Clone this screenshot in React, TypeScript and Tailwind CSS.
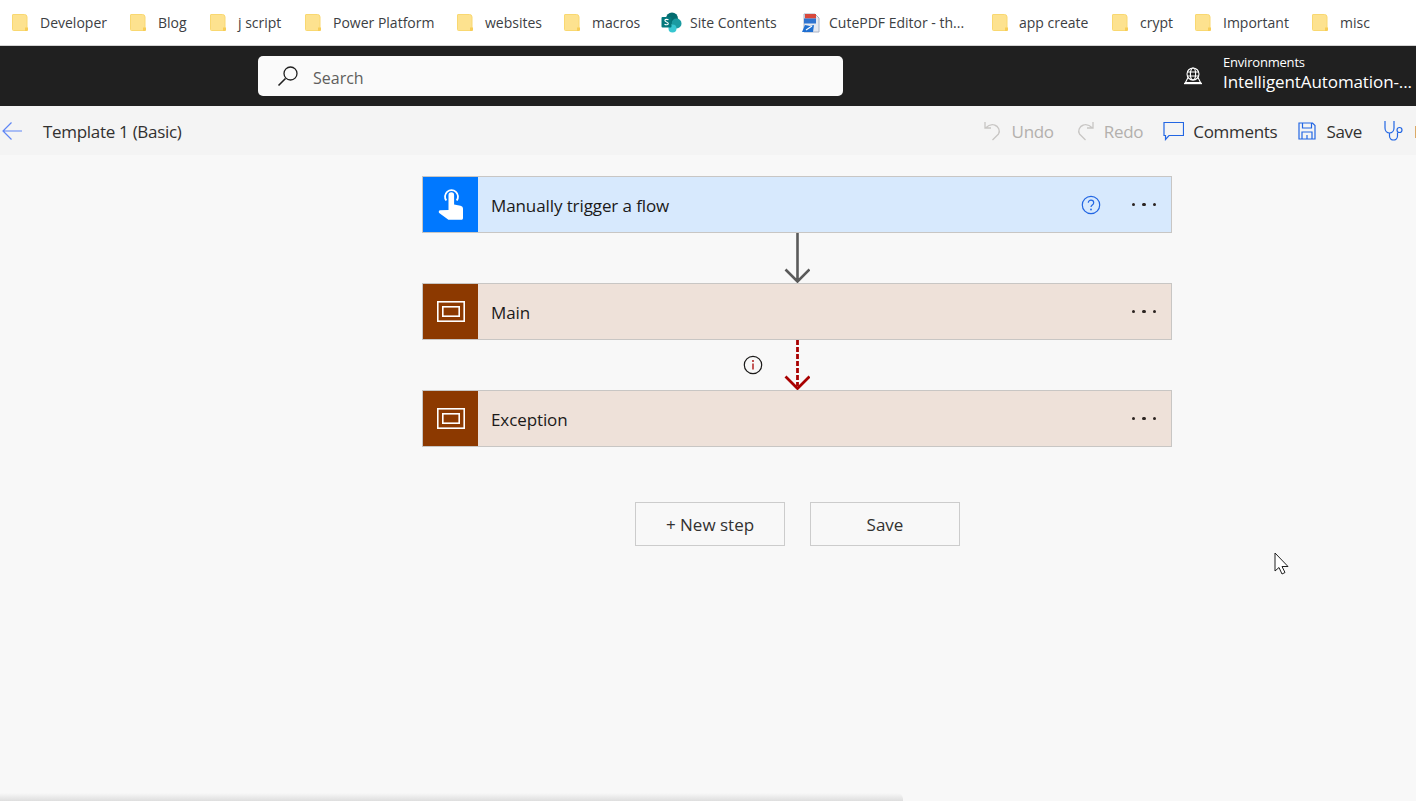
import type { FC, ReactNode } from "react";

const FolderIcon: FC = () => (
  <svg width="17" height="19" viewBox="0 0 17 19" className="shrink-0">
    <path d="M1 1.5h11.5q2.500 0 2.500 2.500v11l-2 2.500H1.500q-1 0-1-1V2q0-.5.5-.5z" fill="#fde28f" stroke="#f9d871" />
    <path d="M13 14.500h3v2.500q0 1-1 1h-2z" fill="#f7cd57" />
  </svg>
);

const SharePointIcon: FC = () => (
  <svg width="21" height="21" viewBox="0 0 21 21" className="shrink-0">
    <circle cx="11" cy="6.500" r="6" fill="#036c70" />
    <circle cx="15.500" cy="11.500" r="5" fill="#1a9ba1" />
    <circle cx="11.500" cy="16.500" r="4" fill="#37c6d0" />
    <rect x="0.500" y="5" width="10" height="10.500" rx="1" fill="#03787c" />
    <path d="M7.500 7.800c-1.500-.8-3.600-.5-3.600.8 0 1.500 3.400 1.200 3.400 2.900 0 1.300-2.200 1.600-3.800.8" fill="none" stroke="#fff" strokeWidth="1.100" />
  </svg>
);

const CutePdfIcon: FC = () => (
  <svg width="19" height="20" viewBox="0 0 19 20" className="shrink-0">
    <path d="M3 1h11l4 4v14H3z" fill="#e6e9f0" stroke="#aab2c4" />
    <rect x="4" y="1" width="11" height="4.500" fill="#d8483c" />
    <rect x="3" y="5.500" width="12" height="5" fill="#2f74d0" />
    <path d="M1 19l3-7 5 1 4-1-1 7z" fill="#1f6fd1" />
    <path d="M5 17l6-4" stroke="#fff" strokeWidth="1.200" />
  </svg>
);

const bookmarks: { label: string; icon: ReactNode; width: string; gap: string }[] = [
  { label: "Developer", icon: <FolderIcon />, width: "w-[118px]", gap: "gap-[11px]" },
  { label: "Blog", icon: <FolderIcon />, width: "w-[80px]", gap: "gap-[11px]" },
  { label: "j script", icon: <FolderIcon />, width: "w-[95px]", gap: "gap-[11px]" },
  { label: "Power Platform", icon: <FolderIcon />, width: "w-[152px]", gap: "gap-[11px]" },
  { label: "websites", icon: <FolderIcon />, width: "w-[107px]", gap: "gap-[11px]" },
  { label: "macros", icon: <FolderIcon />, width: "w-[97px]", gap: "gap-[11px]" },
  { label: "Site Contents", icon: <SharePointIcon />, width: "w-[140px]", gap: "gap-[8px]" },
  { label: "CutePDF Editor - th...", icon: <CutePdfIcon />, width: "w-[191px]", gap: "gap-[9px]" },
  { label: "app create", icon: <FolderIcon />, width: "w-[120px]", gap: "gap-[10px]" },
  { label: "crypt", icon: <FolderIcon />, width: "w-[83px]", gap: "gap-[11px]" },
  { label: "Important", icon: <FolderIcon />, width: "w-[117px]", gap: "gap-[11px]" },
  { label: "misc", icon: <FolderIcon />, width: "w-[70px]", gap: "gap-[11px]" },
];

const BookmarksBar: FC = () => (
  <div className="flex h-[46px] items-center border-b border-[#d4d4d4] bg-white pl-[12px]">
    {bookmarks.map((item) => (
      <div key={item.label} className={`flex shrink-0 items-center ${item.width} ${item.gap}`}>
        {item.icon}
        <span className="whitespace-nowrap text-[14px] text-[#3c4043]">{item.label}</span>
      </div>
    ))}
  </div>
);

const Header: FC = () => (
  <div className="flex h-[60px] items-center bg-[#202020] pl-[258px]">
    <div className="flex h-[40px] w-[585px] items-center gap-[14px] rounded-[5px] bg-[#fafafa] pl-[19px]">
      <svg width="22" height="22" viewBox="0 0 22 22" fill="none" stroke="#202020" strokeWidth="1.300">
        <circle cx="13.500" cy="8.500" r="6.500" />
        <path d="M8.500 13.500L1.500 20.500" strokeWidth="1.600" />
      </svg>
      <span className="pt-[4px] text-[16px] text-[#605e5c]">Search</span>
    </div>
    <svg width="20" height="18" viewBox="0 0 20 18" fill="none" stroke="#fff" strokeWidth="1.100" className="ml-[340px]">
      <circle cx="10" cy="7" r="6" />
      <ellipse cx="10" cy="7" rx="2.600" ry="6" />
      <path d="M4 5h12M4 9h12" />
      <path d="M5 10.500L2.500 15.500H17.500L15 10.500" />
      <path d="M1 16.500h18" strokeWidth="1.400" />
    </svg>
    <div className="ml-[20px] flex flex-col pb-[6px] text-white">
      <span className="text-[13px] leading-[16px] tracking-[-0.2px]">Environments</span>
      <span className="whitespace-nowrap text-[17px] leading-[23px] tracking-[-0.1px]">IntelligentAutomation-...</span>
    </div>
  </div>
);

const Toolbar: FC = () => (
  <div className="flex h-[49px] items-center overflow-hidden bg-[#f4f4f4]">
    <svg width="24" height="20" viewBox="0 0 24 20" fill="none" stroke="#5f86f5" strokeWidth="1.200" className="ml-[1px] shrink-0">
      <path d="M21 10H2M10.500 1.500L2 10l8.500 8.500" />
    </svg>
    <span className="ml-[18px] whitespace-nowrap pt-[2px] text-[17px] tracking-[-0.3px] text-[#323130]">Template 1 (Basic)</span>
    <div className="ml-[802px] flex shrink-0 items-center whitespace-nowrap text-[17px] tracking-[-0.3px]">
      <svg width="18" height="22" viewBox="0 0 18 22" fill="none" stroke="#c8c6c4" strokeWidth="1.300">
        <path d="M1 2v6h6M1.500 8c3-3 6-4 9-3 4 1 6 6 4 9l-6 6" />
      </svg>
      <span className="ml-[10px] pt-[2px] text-[#b3b0ad]">Undo</span>
      <svg width="18" height="22" viewBox="0 0 18 22" fill="none" stroke="#c8c6c4" strokeWidth="1.300" className="ml-[22px]">
        <path d="M17 2v6h-6M16.500 8c-3-3-6-4-9-3-4 1-6 6-4 9l6 6" />
      </svg>
      <span className="ml-[10px] pt-[2px] text-[#b3b0ad]">Redo</span>
      <svg width="21" height="20" viewBox="0 0 21 20" fill="none" stroke="#2266e3" strokeWidth="1.200" className="ml-[20px]">
        <path d="M1 1.500h19.500v13H6L2.500 18.500v-4H1z" />
      </svg>
      <span className="ml-[9px] pt-[2px] text-[#323130]">Comments</span>
      <svg width="18" height="18" viewBox="0 0 18 18" fill="none" stroke="#2266e3" strokeWidth="1.200" className="ml-[21px]">
        <path d="M1 1h13.500L17 3.500V17H1zM4.500 1v5h9V1M4 17v-7h10v7M9 13v4" />
      </svg>
      <span className="ml-[10px] pt-[2px] text-[#323130]">Save</span>
      <svg width="21" height="22" viewBox="0 0 21 22" fill="none" stroke="#2266e3" strokeWidth="1.200" className="ml-[22px]">
        <path d="M1 1v7c0 3 2 5 4.500 5S10 11 10 8V1M5.500 13v3c0 2.500 2 4 4 4s4-1.500 4-4v-3.500" />
        <circle cx="15.500" cy="10" r="2.500" />
      </svg>
      <span className="ml-[9px] pt-[2px] text-[#323130]">Flow checker</span>
    </div>
  </div>
);

const MoreDots: FC = () => (
  <div className="flex items-center gap-[7px]">
    <span className="size-[3.500px] rounded-full bg-[#2b2320]" />
    <span className="size-[3.500px] rounded-full bg-[#2b2320]" />
    <span className="size-[3.500px] rounded-full bg-[#2b2320]" />
  </div>
);

const ScopeIcon: FC = () => (
  <svg width="28" height="21" viewBox="0 0 28 21" fill="none" stroke="#fff" strokeWidth="1.600">
    <rect x="0.800" y="0.800" width="26.400" height="19.400" />
    <rect x="5.800" y="5.800" width="16.400" height="9.400" />
  </svg>
);

const TouchIcon: FC = () => (
  <svg width="26" height="35" viewBox="0 0 26 35" fill="none">
    <path d="M8.300 13.500a6.500 6.500 0 1 1 10.400 0" stroke="#fff" strokeWidth="1.800" />
    <path
      d="M10.500 8a2.800 2.800 0 0 1 5.600 0v9.500l6.400 1.300c1.600.4 2.500 1.400 2.500 3v9.200c0 1-.6 1.800-1.500 1.800H11.500c-.8 0-1.500-.3-2.100-.9L1.200 26c-.9-1-.4-2.500 1-2.700l8.300-.3z"
      fill="#fff"
    />
  </svg>
);

interface FlowCardProps {
  title: string;
  icon: ReactNode;
  iconBg: string;
  cardBg: string;
  extra?: ReactNode;
}

const FlowCard: FC<FlowCardProps> = ({ title, icon, iconBg, cardBg, extra }) => (
  <div className={`flex h-[57px] items-stretch border border-[#c8c6c4] ${cardBg}`}>
    <div className={`flex w-[55px] items-center justify-center ${iconBg}`}>{icon}</div>
    <span className="ml-[13px] self-center pt-[2px] text-[17px] tracking-[-0.1px] text-[#1b1a19]">{title}</span>
    <div className="ml-auto flex items-center pr-[15px]">
      {extra}
      <MoreDots />
    </div>
  </div>
);

const Canvas: FC = () => (
  <div className="relative flex-1 overflow-hidden bg-[#f8f8f8] pl-[422px] pt-[21px]">
    <div className="w-[750px]">
      <FlowCard
        title="Manually trigger a flow"
        icon={<TouchIcon />}
        iconBg="bg-[#0078ff]"
        cardBg="bg-[#d7e9fd]"
        extra={
          <svg width="20" height="20" viewBox="0 0 20 20" fill="none" className="mr-[31px]">
            <circle cx="10" cy="10" r="8.700" stroke="#2266e3" strokeWidth="1.200" />
            <path d="M7.300 7.800c0-1.600 1.200-2.600 2.700-2.600s2.700 1 2.700 2.500c0 2.300-2.700 2.300-2.700 4.300" stroke="#2266e3" strokeWidth="1.200" />
            <circle cx="10" cy="14.500" r="0.900" fill="#2266e3" />
          </svg>
        }
      />
      <div className="flex h-[50px] justify-center">
        <svg width="26" height="50" viewBox="0 0 26 50" fill="none" stroke="#5a5a5a" strokeWidth="2.600">
          <path d="M13.500 0v48M1.500 36.500L13.500 48.500l12-12" />
        </svg>
      </div>
      <FlowCard title="Main" icon={<ScopeIcon />} iconBg="bg-[#8c3900]" cardBg="bg-[#eee1d9]" />
      <div className="relative flex h-[50px] justify-center">
        <svg width="26" height="50" viewBox="0 0 26 50" fill="none" stroke="#a80000" strokeWidth="2.800">
          <path d="M13.500 0v46" strokeDasharray="5 2" />
          <path d="M1.500 36.500L13.500 48.500l12-12" />
        </svg>
        <svg width="20" height="20" viewBox="0 0 20 20" fill="none" className="absolute left-[321px] top-[15px]">
          <circle cx="10" cy="10" r="8.700" stroke="#1b1a19" strokeWidth="1.200" />
          <path d="M10 8.500v6" stroke="#a80000" strokeWidth="1.300" />
          <circle cx="10" cy="6" r="0.900" fill="#a80000" />
        </svg>
      </div>
      <FlowCard title="Exception" icon={<ScopeIcon />} iconBg="bg-[#8c3900]" cardBg="bg-[#eee1d9]" />
      <div className="mt-[55px] flex gap-[25px] pl-[213px]">
        <button className="h-[44px] w-[150px] border border-[#cccccc] pt-[2px] text-[17px] text-[#323130]">+ New step</button>
        <button className="h-[44px] w-[150px] border border-[#cccccc] pt-[2px] text-[17px] text-[#323130]">Save</button>
      </div>
    </div>
    <svg width="16" height="25" viewBox="0 0 16 25" className="absolute left-[1274px] top-[397px]" fill="#fff" stroke="#202020" strokeWidth="1">
      <path d="M1 1v18l4-3.500 3 6.500 3-1.500-3-6h6z" />
    </svg>
    <div className="absolute bottom-0 left-0 h-[8px] w-[903px] rounded-tr-[6px] bg-gradient-to-b from-transparent to-[#dedede]" />
  </div>
);

export default function App() {
  return (
    <div
      className="flex h-[801px] w-[1416px] flex-col overflow-hidden"
      style={{ fontFamily: '"Open Sans", "Noto Sans", sans-serif' }}
    >
      <BookmarksBar />
      <Header />
      <Toolbar />
      <Canvas />
    </div>
  );
}
